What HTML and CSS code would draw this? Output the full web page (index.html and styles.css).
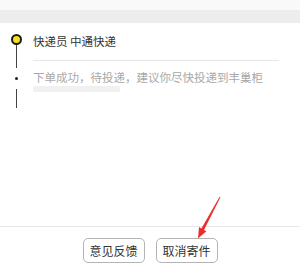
FILE: index.html
```html
<!DOCTYPE html>
<html lang="zh-CN">
  <head>
    <meta charset="UTF-8" />
    <meta name="viewport" content="width=device-width, initial-scale=1.0" />
    <title>寄件详情</title>
    <link rel="stylesheet" href="styles.css">
  </head>
  <body>
    <div class="page">
      <div class="topbar"></div>
      <div class="band"></div>

      <div class="timeline">
        <div class="item first">
          <div class="rail">
            <span class="dot big"></span>
            <span class="line grow"></span>
          </div>
          <div class="content">
            <p class="title">快递员 中通快递</p>
          </div>
        </div>

        <div class="item second">
          <div class="rail">
            <span class="line top"></span>
            <span class="dot small"></span>
            <span class="line bottom"></span>
          </div>
          <div class="content">
            <p class="desc">下单成功，待投递，建议你尽快投递到丰巢柜</p>
            <div class="blur"></div>
          </div>
        </div>
      </div>

      <div class="spacer"></div>

      <div class="actions">
        <button class="btn">意见反馈</button>
        <button class="btn">取消寄件</button>
      </div>

      <svg class="arrow" width="300" height="267" viewBox="0 0 300 267">
        <polygon points="219.6,196.8 220.4,197.2 204.0,229.9 206.4,231.3 198,238.5 199.0,227.1 201.4,228.5" fill="#e8302c" />
      </svg>
    </div>
  </body>
</html>
```

FILE: styles.css
```css
body {
  margin: 0;
  font-family: "Noto Sans CJK SC", "Noto Sans", sans-serif;
  background-color: #fff;
  color: #333;
}
.page {
  position: relative;
  width: 300px;
  height: 267px;
  display: flex;
  flex-direction: column;
  overflow: hidden;
}
.topbar {
  height: 10px;
  background-color: #f9f9f9;
}
.band {
  height: 13px;
  background-color: #ededed;
}
.item {
  display: flex;
}
.rail {
  width: 33px;
  display: flex;
  flex-direction: column;
  align-items: center;
  flex-shrink: 0;
}
.content {
  flex: 1;
  margin-right: 21px;
}
.dot {
  display: block;
  border-radius: 50%;
}
.dot.big {
  width: 7px;
  height: 7px;
  margin-top: 11px;
  background-color: #f6e21c;
  border: 2px solid #1a1a1a;
}
.dot.small {
  width: 3px;
  height: 3px;
  margin: 9px 0;
  background-color: #222;
}
.line {
  display: block;
  width: 1px;
  background-color: #444;
}
.line.grow {
  flex: 1;
}
.line.top {
  height: 7px;
}
.line.bottom {
  height: 19px;
}
.first .content {
  border-bottom: 1px solid #e6e6e6;
}
.title {
  margin: 0;
  font-size: 11.5px;
  line-height: 37px;
  color: #333;
}
.desc {
  margin: 8px 0 0;
  font-size: 11.5px;
  line-height: 16px;
  color: #a8a8a8;
  white-space: nowrap;
}
.blur {
  width: 87px;
  height: 6px;
  margin-top: 1px;
  background-color: #f0f0f0;
  border-radius: 2px;
}
.spacer {
  flex: 1;
}
.actions {
  height: 40px;
  border-top: 1px solid #e8e8e8;
  display: flex;
  justify-content: center;
  align-items: flex-start;
  gap: 11px;
  padding-top: 11px;
  box-sizing: border-box;
  height: 41px;
}
.btn {
  width: 62px;
  height: 25px;
  padding: 0;
  font-family: "Noto Sans CJK SC", sans-serif;
  font-size: 12px;
  color: #333;
  background-color: #fff;
  border: 1px solid #b4b4b4;
  border-radius: 5px;
}
.arrow {
  position: absolute;
  left: 0;
  top: 0;
  pointer-events: none;
}
```
